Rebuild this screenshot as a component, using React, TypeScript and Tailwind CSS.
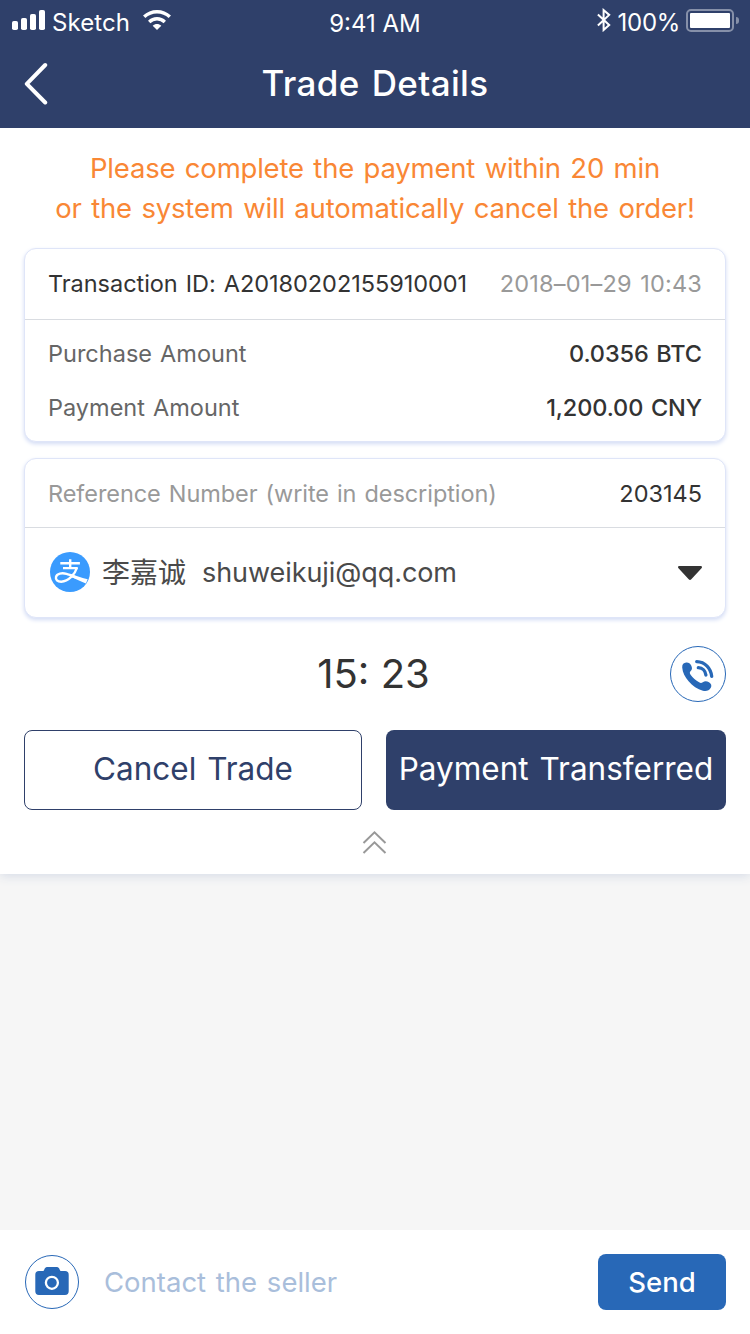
import type { ReactNode } from "react";

function StatusBar() {
  return (
    <div className="flex h-10 items-start px-3 text-[24px] leading-none text-white">
      <div className="flex flex-1 items-start">
        <svg width="33" height="20" viewBox="0 0 33 20" fill="currentColor" className="mt-[10px]">
          <rect x="0" y="11" width="6" height="9" rx="1.8" />
          <rect x="9" y="8" width="6" height="12" rx="1.8" />
          <rect x="18" y="4" width="6" height="16" rx="1.8" />
          <rect x="27" y="0" width="6" height="20" rx="1.8" />
        </svg>
        <span className="mt-[11px] ml-[7px] tracking-[0.1px]">Sketch</span>
        <svg width="28" height="20" viewBox="0 0 28 20" className="mt-[10px] ml-[13px]" fill="none" stroke="currentColor" strokeWidth="3.4">
          <path d="M1.2 6.8C8.3 0 19.7 0 26.8 6.8" />
          <path d="M6.2 11.9c4.4-4.2 11.2-4.2 15.6 0" />
          <path d="M9.7 15.7c2.4-2.2 6.2-2.2 8.6 0L14 20z" fill="currentColor" stroke="none" />
        </svg>
      </div>
      <span className="mt-[12px]">9:41 AM</span>
      <div className="flex flex-1 items-start justify-end">
        <svg width="14" height="24" viewBox="0 0 14 24" className="mt-[8px] mr-[7px]" fill="none" stroke="currentColor" strokeWidth="2">
          <path d="M.9 6.6 12.2 17l-5.6 5V2.1l5.6 4.8L.9 17.6" />
        </svg>
        <span className="mt-[11px] tracking-[-0.3px]">100%</span>
        <div className="mt-[9px] ml-[6px] h-[23px] w-[48px] rounded-[5px] border-2 border-[#8690a9] p-[2px]">
          <div className="h-full rounded-[1px] bg-white" />
        </div>
        <div className="mt-[17px] -mr-px ml-[2px] h-[7px] w-[3px] rounded-r-full bg-[#8690a9]" />
      </div>
    </div>
  );
}

function TitleBar() {
  return (
    <div className="grid h-[88px] grid-cols-[100px_1fr_100px] items-center text-white">
      <svg width="26" height="44" viewBox="0 0 26 44" className="-mt-[3px] ml-6" fill="none" stroke="currentColor" strokeWidth="4" strokeLinecap="round" strokeLinejoin="round">
        <path d="M21.2 4 2.8 22.8 21.2 41.5" />
      </svg>
      <h1 className="-mt-[2px] text-center text-[35px] leading-[44px] font-medium tracking-[0.35px] [word-spacing:2.5px]">Trade Details</h1>
    </div>
  );
}

function Card({ className, children }: { className: string; children: ReactNode }) {
  return (
    <section className={`mx-6 flex flex-col rounded-[12px] border border-[#dfe5f8] bg-white shadow-[0_2px_4px_#d3dcf5] ${className}`}>
      {children}
    </section>
  );
}

function AmountRow({ label, value }: { label: string; value: string }) {
  return (
    <div className="flex h-[54px] items-center justify-between">
      <span className="text-[#666]">{label}</span>
      <span className="font-medium tracking-[-0.1px]">{value}</span>
    </div>
  );
}

function AlipayLogo() {
  return (
    <svg width="40" height="40" viewBox="0 0 40 40" fill="none" stroke="#fff" strokeWidth="2.4" className="-mt-[2px]">
      <circle cx="20" cy="20" r="20" fill="#3a9bfe" stroke="none" />
      <path d="M10.3 11.2h19.6M20.2 7.3V16M13 16.1h14.6" />
      <path d="M27 15.5C25.2 21.8 18.6 29.7 11.2 29.7c-3.8 0-5.8-2-5.2-4.7.8-3.7 6-4.3 10.5-3.2 2.5.6 6.5 2.4 9.5 3.7" />
      <path d="M20.5 21.8c4.2 1.7 10.5 3.9 17.2 5.4l-1.8 4.2c-5.5-2-10.8-4.7-15.6-7.2z" fill="#fff" stroke="none" />
    </svg>
  );
}

function PhoneIcon() {
  return (
    <svg width="56" height="56" viewBox="0 0 56 56" fill="none" stroke="#2868b7">
      <circle cx="28" cy="28" r="27.5" />
      <path
        fill="#2868b7"
        stroke="none"
        d="M12.2 21.5C12 18.4 13.8 16.8 16.2 16.6c2.4-.2 4 1 5 2.8 1.2 2.3 1.1 4.2-.7 5.9-1 1.1-.8 2.1.1 3.4 2.2 3 5.2 5.7 8.5 7.6 1.5.9 2.5.8 3.7-.1 2-1.6 4.2-1.2 6.2.1 2.3 1.5 3 3.5 1.8 5.5-1.7 2.8-4.4 3.7-7.9 2.9-5.4-1.3-10.4-4.9-14.3-9.4-3.6-4.2-6-8.9-6.4-13.8z"
      />
      <path d="M26.7 15.6c8.5.3 14.2 6.8 15 14.8M28.3 21.7c4.4.2 7.1 3.4 7.6 7.3" strokeWidth="3.3" strokeLinecap="round" />
    </svg>
  );
}

function CameraIcon() {
  return (
    <svg width="54" height="54" viewBox="0 0 54 54" fill="#2868b7">
      <circle cx="27" cy="27" r="26.5" fill="none" stroke="#2868b7" />
      <path d="M14 16h4.2c1.2 0 1.1-4 3.8-4h10c2.7 0 2.6 4 3.8 4H40a3.7 3.7 0 0 1 3.7 3.7v16.6A3.7 3.7 0 0 1 40 40H14a3.7 3.7 0 0 1-3.7-3.7V19.7A3.7 3.7 0 0 1 14 16z" />
      <circle cx="26.9" cy="27.8" r="6" stroke="#fff" strokeWidth="2.3" />
    </svg>
  );
}

export default function App() {
  return (
    <div className="flex h-[1334px] w-[750px] flex-col bg-[#f6f6f6] font-['Inter','Noto_Sans_CJK_SC',sans-serif] text-[#333]">
      <header className="relative z-20 bg-[#2f406a]">
        <StatusBar />
        <TitleBar />
      </header>

      <main className="z-10 flex h-[746px] shrink-0 flex-col bg-white shadow-[0_2px_10px_#d5dbe6]">
        <p className="mt-5 text-center text-[27.5px] leading-10 tracking-[-0.2px] whitespace-nowrap text-[#f98735] [word-spacing:2px]">
          Please complete the payment within 20 min
          <br />
          or the system will automatically cancel the order!
        </p>

        <Card className="mt-5 h-[194px] text-[23.5px] [word-spacing:1.5px]">
          <div className="flex h-[71px] items-center justify-between border-b border-[#d9dce1] px-[23px] whitespace-nowrap">
            <span className="tracking-[-0.04px]">Transaction ID: A20180202155910001</span>
            <span className="tracking-[0.2px] text-[#999]">2018–01–29 10:43</span>
          </div>
          <div className="px-[23px] pt-[7px]">
            <AmountRow label="Purchase Amount" value="0.0356 BTC" />
            <AmountRow label="Payment Amount" value="1,200.00 CNY" />
          </div>
        </Card>

        <Card className="mt-4 h-[160px]">
          <div className="flex h-[69px] items-center justify-between border-b border-[#d9dce1] px-[23px] pt-[2px] text-[23.5px] whitespace-nowrap">
            <span className="tracking-[-0.07px] text-[#999] [word-spacing:1.5px]">Reference Number (write in description)</span>
            <span>203145</span>
          </div>
          <div className="flex flex-1 items-center pr-[23px] pl-[25px] text-[#4a4a4a]">
            <AlipayLogo />
            <span className="ml-3 text-[28px] leading-10">李嘉诚</span>
            <span className="ml-4 text-[27px] leading-10 tracking-[-0.07px]">shuweikuji@qq.com</span>
            <svg width="24" height="14" viewBox="0 0 24 14" className="ml-auto" fill="#333">
              <path d="M1.5 0h21C24 0 24.4 1.4 23.5 2.3L13.3 13.2c-.8.9-1.8.9-2.6 0L.5 2.3C-.4 1.4 0 0 1.5 0z" />
            </svg>
          </div>
        </Card>

        <div className="mt-7 grid h-14 grid-cols-[56px_1fr_56px] items-center px-6">
          <span className="col-start-2 pr-[3px] text-center text-[40px] leading-none">15: 23</span>
          <PhoneIcon />
        </div>

        <div className="mt-7 flex h-20 gap-6 px-6 text-[31.5px] whitespace-nowrap">
          <button className="w-[338px] rounded-lg border border-[#2f406a] pb-[2px] text-[#2f406a] [word-spacing:2px]">Cancel Trade</button>
          <button className="w-[340px] rounded-lg bg-[#2f406a] pb-[2px] text-white [word-spacing:2px]">Payment Transferred</button>
        </div>

        <svg width="26" height="24" viewBox="0 0 26 24" className="mx-auto mt-5" fill="none" stroke="#999" strokeWidth="2">
          <path d="M1.5 13 12.5 2.4 23.5 13M1.5 23 12.5 12.4 23.5 23" />
        </svg>
      </main>

      <footer className="mt-auto flex h-[104px] shrink-0 items-center bg-white pr-6 pl-[25px]">
        <CameraIcon />
        <span className="ml-[25px] flex-1 pt-[2px] text-[27.5px] text-[#a9bedb] [word-spacing:2px]">Contact the seller</span>
        <button className="h-14 w-32 rounded-lg bg-[#2868b7] pt-[2px] text-[27.5px] font-medium text-white">Send</button>
      </footer>
    </div>
  );
}
